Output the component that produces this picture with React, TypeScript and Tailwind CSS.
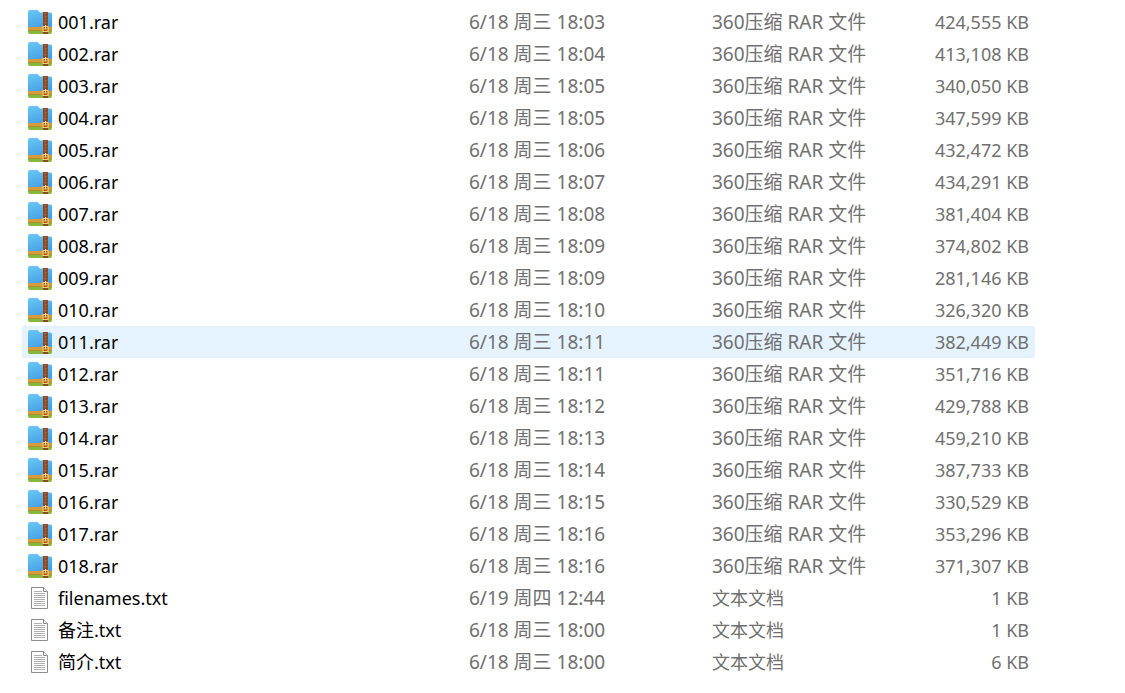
type FileKind = "rar" | "txt";

interface FileEntry {
  name: string;
  modified: string;
  size: string;
  kind: FileKind;
}

const TYPE_LABELS: Record<FileKind, string> = {
  rar: "360压缩 RAR 文件",
  txt: "文本文档",
};

const HOVERED = "011.rar";

const files: FileEntry[] = [
  { name: "001.rar", modified: "6/18 周三 18:03", size: "424,555 KB", kind: "rar" },
  { name: "002.rar", modified: "6/18 周三 18:04", size: "413,108 KB", kind: "rar" },
  { name: "003.rar", modified: "6/18 周三 18:05", size: "340,050 KB", kind: "rar" },
  { name: "004.rar", modified: "6/18 周三 18:05", size: "347,599 KB", kind: "rar" },
  { name: "005.rar", modified: "6/18 周三 18:06", size: "432,472 KB", kind: "rar" },
  { name: "006.rar", modified: "6/18 周三 18:07", size: "434,291 KB", kind: "rar" },
  { name: "007.rar", modified: "6/18 周三 18:08", size: "381,404 KB", kind: "rar" },
  { name: "008.rar", modified: "6/18 周三 18:09", size: "374,802 KB", kind: "rar" },
  { name: "009.rar", modified: "6/18 周三 18:09", size: "281,146 KB", kind: "rar" },
  { name: "010.rar", modified: "6/18 周三 18:10", size: "326,320 KB", kind: "rar" },
  { name: "011.rar", modified: "6/18 周三 18:11", size: "382,449 KB", kind: "rar" },
  { name: "012.rar", modified: "6/18 周三 18:11", size: "351,716 KB", kind: "rar" },
  { name: "013.rar", modified: "6/18 周三 18:12", size: "429,788 KB", kind: "rar" },
  { name: "014.rar", modified: "6/18 周三 18:13", size: "459,210 KB", kind: "rar" },
  { name: "015.rar", modified: "6/18 周三 18:14", size: "387,733 KB", kind: "rar" },
  { name: "016.rar", modified: "6/18 周三 18:15", size: "330,529 KB", kind: "rar" },
  { name: "017.rar", modified: "6/18 周三 18:16", size: "353,296 KB", kind: "rar" },
  { name: "018.rar", modified: "6/18 周三 18:16", size: "371,307 KB", kind: "rar" },
  { name: "filenames.txt", modified: "6/19 周四 12:44", size: "1 KB", kind: "txt" },
  { name: "备注.txt", modified: "6/18 周三 18:00", size: "1 KB", kind: "txt" },
  { name: "简介.txt", modified: "6/18 周三 18:00", size: "6 KB", kind: "txt" },
];

function ArchiveIcon() {
  return (
    <svg viewBox="0 0 24 24" className="size-6 shrink-0" aria-hidden="true">
      <defs>
        <linearGradient id="folder" x1="0" y1="0" x2="0.4" y2="1">
          <stop offset="0" stopColor="#68c8f4" />
          <stop offset="1" stopColor="#459fe6" />
        </linearGradient>
      </defs>
      <path d="M0 2a2 2 0 0 1 2-2h7.5l2.5 2.5h10a2 2 0 0 1 2 2V19H0z" fill="url(#folder)" />
      <path d="M0 18h24v4a2 2 0 0 1-2 2H2a2 2 0 0 1-2-2z" fill="#84b83a" />
      <path d="M0 17h24v3H0z" fill="#d99a3e" />
      <path d="M0 20h24v1H0z" fill="#a98f30" />
      {/* 拉链 */}
      <path d="M15 2h5v22h-5z" fill="#8c4a28" />
      <path d="M17.5 3v12" stroke="#ad6a40" strokeWidth="1.5" strokeDasharray="1.5 1.5" />
      <path d="M15 16.5h5v5h-5z" fill="#a8521f" stroke="#ffce62" strokeWidth="1.2" />
      <path d="M17.5 15v4M16.500 19h2" stroke="#ffe4a0" />
    </svg>
  );
}

function TextIcon() {
  return (
    <svg viewBox="0 0 24 24" className="size-6 shrink-0" aria-hidden="true">
      <path d="M3.5 1.5h12l4 4v17h-16z" fill="#fff" stroke="#8c8c8c" />
      <path d="M15.5 1.5v4h4" fill="#f2f2f2" stroke="#8c8c8c" />
      <path d="M6 5.5h8M6 7.5h11M6 9.5h11M6 11.5h11M6 13.5h11M6 15.5h11M6 17.5h11M6 19.5h11" stroke="#b0b0b0" />
    </svg>
  );
}

export default function App() {
  return (
    <main className="min-h-screen bg-white pt-1.5 pr-[90px] pl-[22px] font-['Noto_Sans','Noto_Sans_CJK_SC',sans-serif] text-[18px] leading-8 text-[#707070]">
      <table aria-label="文件列表" className="w-full table-fixed border-collapse whitespace-nowrap">
        <colgroup>
          <col />
          <col className="w-[243px]" />
          <col className="w-[189px]" />
          <col className="w-[140px]" />
        </colgroup>
        <tbody>
          {files.map((f) => (
            <tr key={f.name} className={f.name === HOVERED ? "h-8 bg-[#e5f3ff]" : "h-8 hover:bg-[#e5f3ff]"}>
              <td className="px-1.5 py-0">
                <div className="flex h-8 items-center gap-1.5">
                  {f.kind === "rar" ? <ArchiveIcon /> : <TextIcon />}
                  <span className="truncate text-black">{f.name}</span>
                </div>
              </td>
              <td className="px-1.5 py-0 text-[19px]">{f.modified}</td>
              <td className={f.kind === "rar" ? "px-1.5 py-0 text-[19px]" : "px-1.5 py-0"}>{TYPE_LABELS[f.kind]}</td>
              <td className="px-1.5 py-0 text-right">{f.size}</td>
            </tr>
          ))}
        </tbody>
      </table>
    </main>
  );
}
